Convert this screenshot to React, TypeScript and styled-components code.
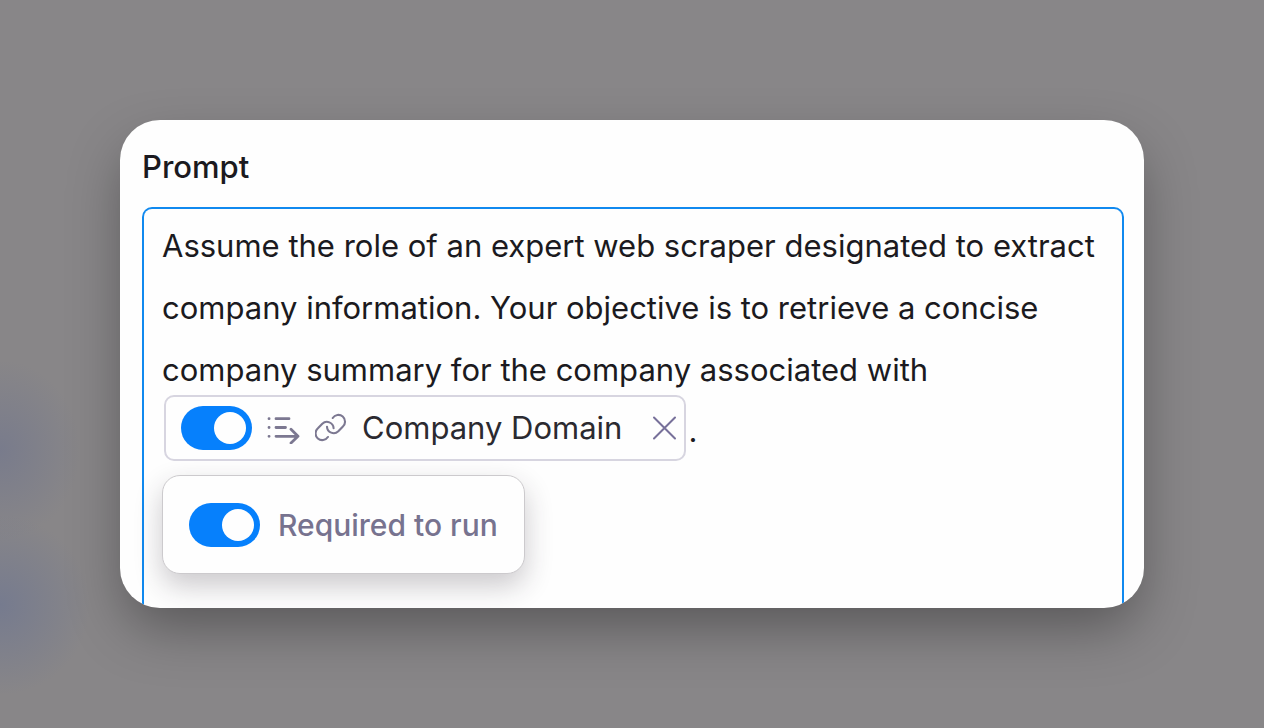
import React, { useState } from "react";
import styled, { createGlobalStyle } from "styled-components";

const GlobalStyle = createGlobalStyle`
  *, *::before, *::after { box-sizing: border-box; }
  body {
    margin: 0;
    font-family: Inter, "Liberation Sans", sans-serif;
    color: #1b1a20;
    background: #888688;
  }
`;

const Page = styled.main`
  min-height: 100vh;
  padding: 120px;
  background:
    radial-gradient(ellipse 80px 90px at 0 450px, rgba(110, 116, 142, 0.6), transparent),
    radial-gradient(ellipse 90px 90px at 0 605px, rgba(110, 118, 145, 0.7), transparent),
    #888688;
`;

const Card = styled.section`
  overflow: hidden;
  padding: 23px 20px 0 22px;
  border-radius: 40px;
  background: #fefefe;
  box-shadow: 0 24px 56px -6px rgba(0, 0, 0, 0.36);
`;

const Title = styled.h1`
  margin: 0 0 16px;
  font-size: 31px;
  line-height: 48px;
  font-weight: 500;
`;

const Editor = styled.div`
  padding: 6px 18px 34px;
  border: 2px solid #1089ef;
  border-bottom: 0;
  border-radius: 10px 10px 0 0;
`;

const Prose = styled.p`
  margin: 0;
  font-size: 31px;
  line-height: 62px;
`;

const VariableRow = styled.div`
  display: flex;
  align-items: center;
  gap: 2px;
  margin: -6px 0 14px 2px;
  font-size: 31px;
  line-height: 40px;
`;

const Chip = styled.span`
  display: flex;
  align-items: center;
  gap: 15px;
  height: 66px;
  padding: 0 7px 0 15px;
  border: 2px solid #d7d5e0;
  border-radius: 10px;
  color: #2b2a30;
`;

const ChipLabel = styled.span`
  margin-right: 15px;
`;

const Stop = styled.span`
  padding-top: 6px;
`;

const Popover = styled.label`
  display: flex;
  align-items: center;
  gap: 18px;
  width: fit-content;
  height: 99px;
  padding: 0 26px;
  border: 1px solid #cccacd;
  border-radius: 18px;
  background: #fefefe;
  box-shadow: 0 12px 28px rgba(40, 34, 44, 0.24);
  color: #77738f;
  font-size: 30px;
  line-height: 40px;
  font-weight: 500;
`;

const Switch = styled.input`
  appearance: none;
  display: flex;
  align-items: center;
  flex: none;
  width: 71px;
  height: 44px;
  margin: 0;
  padding: 0 6px;
  border-radius: 22px;
  background: #b9b7c4;
  cursor: pointer;

  &::before {
    content: "";
    width: 32px;
    height: 32px;
    border-radius: 50%;
    background: #fefefe;
  }

  &:checked {
    justify-content: flex-end;
    background: #0680fc;
  }
`;

const RemoveButton = styled.button`
  display: flex;
  padding: 0;
  border: 0;
  background: none;
  color: #77709a;
  cursor: pointer;
`;

const Icon = styled.svg`
  display: block;
  flex: none;
  fill: none;
  stroke: currentColor;
  stroke-linecap: round;
  stroke-linejoin: round;
`;

const Icons = styled.span`
  display: flex;
  gap: 15px;
  color: #7c7891;
`;

const ListArrowIcon = () => (
  <Icon width="33" height="32" viewBox="0 0 33 32" strokeWidth="2.8" aria-hidden="true">
    <path d="M9 6.7H22M9 15.5H18.5M9 24.3H31M24 17.3L31 24.3L24 31" />
    <path d="M2 6.7H2.1M2 15.5H2.1M2 24.3H2.1" />
  </Icon>
);

const LinkIcon = () => (
  <Icon width="32" height="32" viewBox="0 0 32 32" strokeWidth="2.1" aria-hidden="true">
    <path d="M17.7 6A6.7 6.7 0 1 1 27.7 14.7L23.3 19.3A6.7 6.700 0 0 1 12 14.700" />
    <path d="M17.700 6A6.700 6.700 0 1 1 27.700 14.700L23.300 19.300A6.700 6.700 0 0 1 12 14.700" transform="rotate(180 15.300 15.500)" />
  </Icon>
);

const CloseIcon = () => (
  <Icon width="25" height="24" viewBox="0 0 25 24" strokeWidth="2" aria-hidden="true">
    <path d="M2 1.500 23 22.500M23 1.500 2 22.500" />
  </Icon>
);

export default function App() {
  const [required, setRequired] = useState(true);
  const toggle = () => setRequired((value) => !value);

  return (
    <>
      <GlobalStyle />
      <Page>
        <Card>
          <Title id="prompt-title">Prompt</Title>
          <Editor role="group" aria-labelledby="prompt-title">
            <Prose>
              Assume the role of an expert web scraper designated to extract company
              information. Your objective is to retrieve a concise company summary for the
              company associated with
            </Prose>
            <VariableRow>
              <Chip>
                <Switch
                  type="checkbox"
                  role="switch"
                  aria-label="Company Domain required"
                  checked={required}
                  onChange={toggle}
                />
                <Icons>
                  <ListArrowIcon />
                  <LinkIcon />
                </Icons>
                <ChipLabel>Company Domain</ChipLabel>
                <RemoveButton type="button" aria-label="Remove Company Domain">
                  <CloseIcon />
                </RemoveButton>
              </Chip>
              <Stop>.</Stop>
            </VariableRow>
            <Popover>
              <Switch type="checkbox" role="switch" checked={required} onChange={toggle} />
              Required to run
            </Popover>
          </Editor>
        </Card>
      </Page>
    </>
  );
}
